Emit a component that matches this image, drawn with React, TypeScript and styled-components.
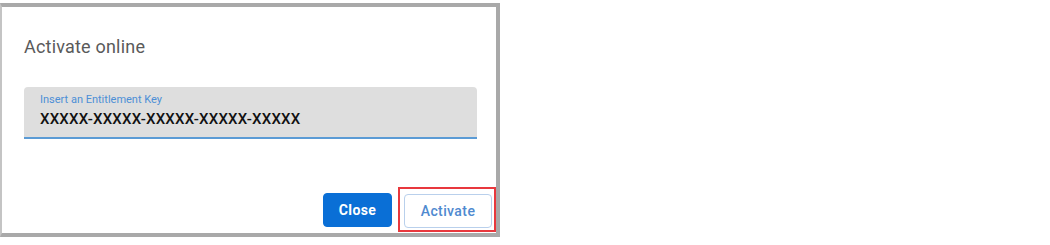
import React from "react";
import styled, { createGlobalStyle } from "styled-components";

const GlobalStyle = createGlobalStyle`
    html, body {
        margin: 0;
        padding: 0;
        background: #ffffff;
        font-family: Roboto, "Liberation Sans", Arial, sans-serif;
    }
`;

const Page = styled.div`
    width: 1050px;
    height: 245px;
    padding-top: 3px;
    box-sizing: border-box;
`;

const Dialog = styled.div`
    width: 500px;
    height: 234px;
    box-sizing: border-box;
    background: #ffffff;
    border: 4px solid #a9a9a9;
    border-left: 2px solid #c4c4c4;
    display: flex;
    flex-direction: column;
    padding: 28px 0 1px 22px;
`;

const Title = styled.h2`
    margin: 0;
    font-size: 18px;
    font-weight: 400;
    color: #5a5a5a;
    line-height: 24px;
    letter-spacing: 0.2px;
`;

const Field = styled.div`
    margin-top: 28px;
    margin-right: 19px;
    height: 52px;
    box-sizing: border-box;
    background: #dedede;
    border-radius: 4px 4px 0 0;
    border-bottom: 2px solid #5b9bd5;
    padding: 6px 16px 0 16px;
    display: flex;
    flex-direction: column;
`;

const Label = styled.label`
    font-size: 11px;
    line-height: 13px;
    color: #4d8fd6;
`;

const Value = styled.div`
    margin-top: 3px;
    font-size: 15px;
    line-height: 20px;
    font-weight: 500;
    color: #111111;
    letter-spacing: 0.2px;
`;

const Actions = styled.div`
    margin-top: auto;
    display: flex;
    justify-content: flex-end;
    align-items: center;
    gap: 6px;
`;

const Button = styled.button<{ $primary?: boolean }>`
    font-family: inherit;
    font-size: 14px;
    font-weight: ${p => (p.$primary ? 700 : 500)};
    height: 34px;
    box-sizing: border-box;
    border-radius: 4px;
    cursor: pointer;
    padding: 0 12px;
    background: ${p => (p.$primary ? "#0a6fd6" : "#ffffff")};
    color: ${p => (p.$primary ? "#ffffff" : "#4f8ad0")};
    border: 1px solid ${p => (p.$primary ? "#0a6fd6" : "#b9d0ec")};
    letter-spacing: 0.4px;
`;

const Highlight = styled.div`
    border: 2px solid #e8383d;
    padding: 5px 2px 2px 4px;
    display: flex;
`;

export default function App() {
    return (
        <Page>
            <GlobalStyle />
            <Dialog>
                <Title>Activate online</Title>
                <Field>
                    <Label htmlFor="key">Insert an Entitlement Key</Label>
                    <Value id="key">XXXXX-XXXXX-XXXXX-XXXXX-XXXXX</Value>
                </Field>
                <Actions>
                    <Button $primary style={{ width: 69 }}>Close</Button>
                    <Highlight>
                        <Button style={{ width: 88 }}>Activate</Button>
                    </Highlight>
                </Actions>
            </Dialog>
        </Page>
    );
}
